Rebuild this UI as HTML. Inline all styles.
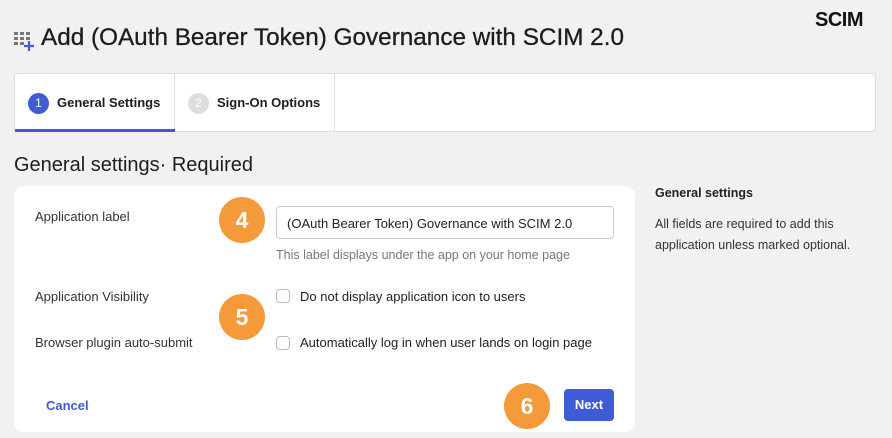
<!DOCTYPE html>
<html><head><style>
*{box-sizing:border-box;margin:0;padding:0}
body{width:892px;height:438px;background:#f1f1f1;font-family:"Liberation Sans",sans-serif;color:#1d1d21;position:relative;overflow:hidden}
.a{position:absolute}
.badge{position:absolute;width:46px;height:46px;border-radius:50%;background:#f59a3a;color:#fff;font-size:23px;font-weight:bold;display:flex;align-items:center;justify-content:center}
.cb{position:absolute;width:14px;height:14px;border:1.5px solid #bbb;border-radius:4px;background:#fff}
.lbl{position:absolute;font-size:13px;color:#333}
</style></head><body>
<div class="a" style="left:815px;top:9px;font-size:20px;font-weight:bold;letter-spacing:-0.5px;color:#111">SCIM</div>
<svg class="a" style="left:13px;top:31px" width="22" height="20">
<g fill="#777"><rect x="1" y="1" width="4" height="3"/><rect x="7" y="1" width="4" height="3"/><rect x="13" y="1" width="4" height="3"/><rect x="1" y="6" width="4" height="3"/><rect x="7" y="6" width="4" height="3"/><rect x="13" y="6" width="4" height="3"/><rect x="1" y="11" width="4" height="3"/><rect x="7" y="11" width="4" height="3"/></g>
<path d="M16 10v10M11 15h10" stroke="#3f5bd6" stroke-width="2.2"/></svg>
<div class="a" style="left:41px;top:24px;font-size:24.3px;color:#1d1d21;-webkit-text-stroke:0.3px #1d1d21">Add (OAuth Bearer Token) Governance with SCIM 2.0</div>
<div class="a" style="left:14px;top:73px;width:862px;height:59px;background:#fff;border:1px solid #ddd;border-radius:4px"></div>
<div class="a" style="left:174px;top:74px;width:1px;height:57px;background:#ddd"></div>
<div class="a" style="left:334px;top:74px;width:1px;height:57px;background:#ddd"></div>
<div class="a" style="left:15px;top:129px;width:160px;height:3px;background:#3f5bd6"></div>
<div class="a" style="left:28px;top:93px;width:21px;height:21px;border-radius:50%;background:#3f5bd6;color:#fff;font-size:12px;text-align:center;line-height:21px">1</div>
<div class="a" style="left:57px;top:95px;font-size:13px;font-weight:bold">General Settings</div>
<div class="a" style="left:188px;top:93px;width:21px;height:21px;border-radius:50%;background:#ddd;color:#fff;font-size:12px;text-align:center;line-height:21px">2</div>
<div class="a" style="left:217px;top:95px;font-size:13px;font-weight:bold">Sign-On Options</div>
<div class="a" style="left:14px;top:154px;font-size:20px">General settings· Required</div>
<div class="a" style="left:14px;top:186px;width:621px;height:246px;background:#fff;border-radius:10px"></div>
<div class="lbl" style="left:35px;top:209px">Application label</div>
<div class="lbl" style="left:35px;top:289px">Application Visibility</div>
<div class="lbl" style="left:35px;top:335px">Browser plugin auto-submit</div>
<div class="a" style="left:276px;top:206px;width:338px;height:33px;border:1px solid #ccc;border-radius:4px;font-size:13px;padding:9px 10px;color:#222">(OAuth Bearer Token) Governance with SCIM 2.0</div>
<div class="a" style="left:276px;top:248px;font-size:12.5px;color:#777">This label displays under the app on your home page</div>
<div class="cb" style="left:276px;top:289px"></div>
<div class="lbl" style="left:300px;top:289px;color:#222">Do not display application icon to users</div>
<div class="cb" style="left:276px;top:336px"></div>
<div class="lbl" style="left:300px;top:335px;color:#222">Automatically log in when user lands on login page</div>
<div class="badge" style="left:219px;top:197px">4</div>
<div class="badge" style="left:219px;top:294px">5</div>
<div class="badge" style="left:504px;top:383px">6</div>
<div class="a" style="left:46px;top:398px;font-size:13px;font-weight:bold;color:#3f5bd6">Cancel</div>
<div class="a" style="left:564px;top:389px;width:50px;height:32px;background:#3f5bd6;border-radius:4px;color:#fff;font-size:13px;font-weight:bold;text-align:center;line-height:32px">Next</div>
<div class="a" style="left:655px;top:186px;font-size:12.5px;font-weight:bold;color:#222">General settings</div>
<div class="a" style="left:655px;top:214px;font-size:12.5px;color:#333;line-height:21px;width:230px">All fields are required to add this application unless marked optional.</div>
</body></html>
